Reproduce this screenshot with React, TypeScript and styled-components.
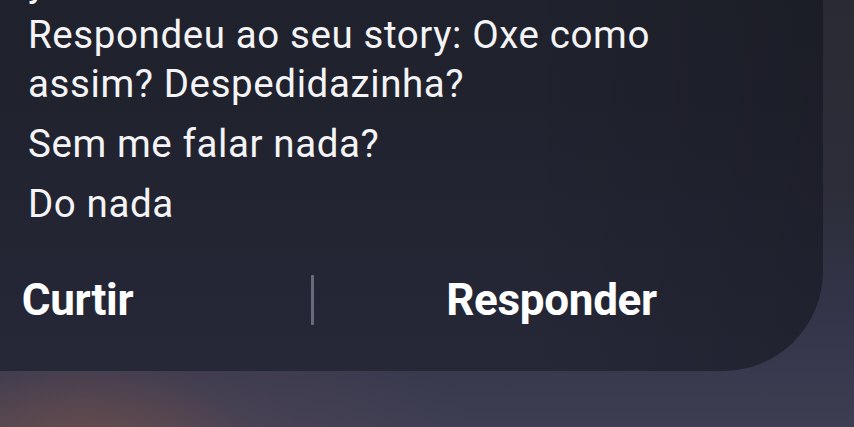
import React from "react";
import styled, { createGlobalStyle } from "styled-components";

const GlobalStyle = createGlobalStyle`
  html, body {
    margin: 0;
    padding: 0;
    width: 854px;
    height: 427px;
    overflow: hidden;
  }
  body {
    font-family: Roboto, "Noto Sans", sans-serif;
    background:
      radial-gradient(ellipse 190px 110px at 80px 470px, rgba(140, 88, 66, 0.55), rgba(140, 88, 66, 0) 100%),
      radial-gradient(ellipse 360px 160px at 120px 450px, rgba(110, 80, 90, 0.35), rgba(110, 80, 90, 0) 100%),
      linear-gradient(180deg, #292a32 0%, #2c2d39 45%, #34354a 75%, #3d3e52 100%);
  }
`;

const Screen = styled.div`
  width: 854px;
  height: 427px;
  overflow: hidden;
`;

const Card = styled.section`
  margin-top: -120px;
  margin-left: -200px;
  width: 1023px;
  box-sizing: border-box;
  padding: 78px 36px 45px 42px;
  border-radius: 100px;
  background:
    linear-gradient(90deg, rgba(0, 0, 0, 0) 0%, rgba(0, 0, 0, 0) 70%, rgba(0, 0, 0, 0.14) 100%),
    linear-gradient(180deg, #1f212b 0%, #20222e 45%, #262838 100%);
  display: flex;
  flex-direction: column;
`;

const Content = styled.div`
  margin-left: 186px;
  display: flex;
  flex-direction: column;
  gap: 11px;
  color: #f4f4f6;
  font-size: 38.5px;
  letter-spacing: 0.6px;
  line-height: 49px;
`;

const Title = styled.div`
  margin-bottom: -8px;
`;

const Line = styled.p`
  margin: 0;
`;

const Actions = styled.div`
  margin-top: 46px;
  height: 52px;
  display: flex;
  align-items: center;
`;

const ActionButton = styled.button`
  flex: 1;
  height: 100%;
  border: 0;
  background: transparent;
  color: #ffffff;
  font-family: Roboto, "Noto Sans", sans-serif;
  font-weight: 700;
  font-size: 44px;
  letter-spacing: -0.3px;
  padding: 0;
  cursor: pointer;
`;

const Divider = styled.span`
  width: 3px;
  height: 50px;
  margin: 0 2px 0 -2px;
  background: #686b7c;
  border-radius: 1px;
`;

export default function App() {
  return (
    <Screen>
      <GlobalStyle />
      <Card>
        <Content>
          <Title>yasmin</Title>
          <Line>
            Respondeu ao seu story: Oxe como
            <br />
            assim? Despedidazinha?
          </Line>
          <Line>Sem me falar nada?</Line>
          <Line>Do nada</Line>
        </Content>
        <Actions>
          <ActionButton>Curtir</ActionButton>
          <Divider />
          <ActionButton>Responder</ActionButton>
        </Actions>
      </Card>
    </Screen>
  );
}
